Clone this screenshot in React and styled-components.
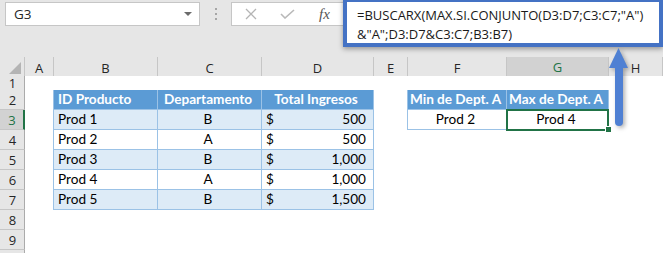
import React from 'react';
import styled, { createGlobalStyle } from 'styled-components';

const GlobalStyle = createGlobalStyle`
  html, body {
    margin: 0;
    padding: 0;
    background: #ffffff;
  }
`;

const BLUE_LINE = '#9bc2e6';
const HEAD_FILL = '#5b9bd5';
const BAND_FILL = '#ddebf7';
const GREEN = '#217346';
const COLUMNS = '25px 29px 104px 104px 112px 34px 99px 102px 1fr';

const tableRows = [
  ['Prod 1', 'B', '500'],
  ['Prod 2', 'A', '500'],
  ['Prod 3', 'B', '1,000'],
  ['Prod 4', 'A', '1,000'],
  ['Prod 5', 'B', '1,500'],
];

function App() {
  return (
    <>
      <GlobalStyle />
      <Frame>
        <TopBar>
          <NameBox>
            <span>G3</span>
            <DropArrow />
          </NameBox>
          <Dots>
            <Dot />
            <Dot />
            <Dot />
          </Dots>
          <FxBox>
            <svg width="12" height="12" viewBox="0 0 12 12">
              <path d="M1 1 L11 11 M11 1 L1 11" stroke="#b4b4b4" strokeWidth="1.3" fill="none" />
            </svg>
            <svg width="15" height="10" viewBox="0 0 15 10">
              <path d="M1 5 L5 9 L14 1" stroke="#b9b9b9" strokeWidth="1.6" fill="none" />
            </svg>
            <FxLabel>fx</FxLabel>
          </FxBox>
        </TopBar>

        <Sheet>
          <Row $h={19}>
            <Corner>
              <CornerTriangle />
            </Corner>
            {['A', 'B', 'C', 'D', 'E', 'F', 'G', 'H'].map((l) => (
              <ColHead key={l} $active={l === 'G'}>
                {l}
              </ColHead>
            ))}
          </Row>

          <Row $h={14}>
            <RowHead $short>1</RowHead>
            <Cell />
            <Cell $bb={BLUE_LINE} />
            <Cell $bb={BLUE_LINE} />
            <Cell $bb={BLUE_LINE} />
            <Cell />
            <Cell $bb={BLUE_LINE} />
            <Cell $bb={BLUE_LINE} />
            <Cell />
          </Row>

          <Row>
            <RowHead>2</RowHead>
            <Cell $rb={BLUE_LINE} />
            <Cell $head>ID Producto</Cell>
            <Cell $head $align="center">Departamento</Cell>
            <Cell $head $align="center">Total Ingresos</Cell>
            <Cell $rb={BLUE_LINE} />
            <Cell $head $align="center">Min de Dept. A</Cell>
            <Cell $head $align="center">Max de Dept. A</Cell>
            <Cell />
          </Row>

          {tableRows.map(([id, dept, total], i) => {
            const n = i + 3;
            const fill = i % 2 === 0 ? BAND_FILL : '#ffffff';
            return (
              <Row key={id}>
                <RowHead $active={n === 3}>{n}</RowHead>
                <Cell $rb={BLUE_LINE} />
                <Cell $fill={fill} $rb={BLUE_LINE} $bb={BLUE_LINE}>
                  {id}
                </Cell>
                <Cell $fill={fill} $rb={BLUE_LINE} $bb={BLUE_LINE} $align="center">
                  {dept}
                </Cell>
                <Cell $fill={fill} $rb={BLUE_LINE} $bb={BLUE_LINE} $align="space-between">
                  <span>$</span>
                  <span>{total}</span>
                </Cell>
                {n === 3 ? (
                  <>
                    <Cell $rb={BLUE_LINE} />
                    <Cell $rb={BLUE_LINE} $bb={BLUE_LINE} $align="center">
                      Prod 2
                    </Cell>
                    <Cell $rb={BLUE_LINE} $bb={BLUE_LINE} $align="center" $selected>
                      Prod 4
                      <FillHandle />
                    </Cell>
                  </>
                ) : (
                  <>
                    <Cell />
                    <Cell />
                    <Cell />
                  </>
                )}
                <Cell />
              </Row>
            );
          })}

          {[8, 9, 10].map((n) => (
            <Row key={n}>
              <RowHead>{n < 10 ? n : ''}</RowHead>
            </Row>
          ))}
        </Sheet>

        <FormulaCallout>
          <FormulaLine>=BUSCARX(MAX.SI.CONJUNTO(D3:D7;C3:C7;"A")</FormulaLine>
          <FormulaLine>&amp;"A";D3:D7&amp;C3:C7;B3:B7)</FormulaLine>
        </FormulaCallout>

        <ArrowWrap>
          <svg width="32" height="90" viewBox="0 0 32 90">
            <rect x="12" y="20" width="8" height="62" rx="4" fill="#4f80d3" />
            <polygon points="15.5,4 6,24 25,24" fill="#4f80d3" />
          </svg>
        </ArrowWrap>
      </Frame>
    </>
  );
}

const Frame = styled.div`
  position: relative;
  width: 663px;
  height: 253px;
  overflow: hidden;
  background: #ffffff;
`;

const TopBar = styled.div`
  height: 57px;
  box-sizing: border-box;
  background: #e6e6e6;
  display: flex;
  align-items: flex-start;
  padding: 2px 0 0 5px;
`;

const NameBox = styled.div`
  width: 195px;
  height: 24px;
  box-sizing: border-box;
  border: 1px solid #c6c6c6;
  background: #ffffff;
  display: flex;
  align-items: center;
  justify-content: space-between;
  padding: 0 7px 0 8px;
  font-family: 'Open Sans', sans-serif;
  font-size: 13.5px;
  color: #262626;
`;

const DropArrow = styled.span`
  width: 0;
  height: 0;
  border-left: 4px solid transparent;
  border-right: 4px solid transparent;
  border-top: 4px solid #6b6b6b;
`;

const Dots = styled.div`
  width: 31px;
  height: 24px;
  display: flex;
  flex-direction: column;
  align-items: center;
  justify-content: center;
  gap: 3px;
`;

const Dot = styled.span`
  width: 2px;
  height: 2px;
  background: #a6a6a6;
`;

const FxBox = styled.div`
  flex: 1;
  height: 24px;
  box-sizing: border-box;
  border: 1px solid #c6c6c6;
  background: #ffffff;
  display: flex;
  align-items: center;
  gap: 23px;
  padding-left: 13px;
`;

const FxLabel = styled.span`
  font-family: 'Liberation Serif', serif;
  font-style: italic;
  font-size: 15px;
  color: #555555;
  margin-left: 1px;
`;

const Sheet = styled.div`
  display: flex;
  flex-direction: column;
`;

const Row = styled.div`
  display: grid;
  grid-template-columns: ${COLUMNS};
  height: ${(p) => p.$h || 20}px;
`;

const Corner = styled.div`
  background: #e6e6e6;
  box-sizing: border-box;
  border-right: 1px solid #c6c6c6;
  border-bottom: 1px solid #ababab;
  display: flex;
  align-items: flex-end;
  justify-content: flex-end;
  padding: 0 3px 3px 0;
`;

const CornerTriangle = styled.span`
  width: 0;
  height: 0;
  border-left: 12px solid transparent;
  border-bottom: 12px solid #b4b4b4;
`;

const ColHead = styled.div`
  box-sizing: border-box;
  background: ${(p) => (p.$active ? '#d2d2d2' : '#e6e6e6')};
  color: ${(p) => (p.$active ? GREEN : '#262626')};
  border-right: 1px solid #c6c6c6;
  border-bottom: ${(p) => (p.$active ? `2px solid ${GREEN}` : '1px solid #ababab')};
  display: flex;
  align-items: center;
  justify-content: center;
  font-family: 'Open Sans', sans-serif;
  font-size: 13px;
  padding-top: 1px;
`;

const RowHead = styled.div`
  box-sizing: border-box;
  background: ${(p) => (p.$active ? '#d2d2d2' : '#e6e6e6')};
  color: ${(p) => (p.$active ? GREEN : '#262626')};
  border-bottom: 1px solid #c6c6c6;
  border-right: ${(p) => (p.$active ? `2px solid ${GREEN}` : '1px solid #ababab')};
  display: flex;
  align-items: ${(p) => (p.$short ? 'flex-start' : 'center')};
  justify-content: center;
  font-family: 'Open Sans', sans-serif;
  font-size: 13px;
  line-height: 14px;
  padding-left: 1px;
`;

const Cell = styled.div`
  position: ${(p) => (p.$selected ? 'relative' : 'static')};
  box-sizing: border-box;
  background: ${(p) => (p.$head ? HEAD_FILL : p.$fill || '#ffffff')};
  color: ${(p) => (p.$head ? '#ffffff' : '#000000')};
  font-weight: ${(p) => (p.$head ? 700 : 400)};
  border-right: ${(p) => (p.$head ? `1px solid ${BLUE_LINE}` : p.$rb ? `1px solid ${p.$rb}` : 'none')};
  border-bottom: ${(p) => (p.$head ? `1px solid ${BLUE_LINE}` : p.$bb ? `1px solid ${p.$bb}` : 'none')};
  display: flex;
  align-items: flex-end;
  justify-content: ${(p) => p.$align || 'flex-start'};
  padding: 0 7px 2px 4px;
  font-family: Lato, 'Liberation Sans', sans-serif;
  font-size: 13.6px;
  line-height: 16px;
  white-space: nowrap;

  ${(p) =>
    p.$selected &&
    `
    &::after {
      content: '';
      position: absolute;
      top: -1px;
      left: -1px;
      right: -1px;
      bottom: -2px;
      border: 2px solid ${GREEN};
      pointer-events: none;
    }
  `}
`;

const FillHandle = styled.span`
  position: absolute;
  right: -4px;
  bottom: -4px;
  width: 5px;
  height: 5px;
  background: ${GREEN};
  border: 1px solid #ffffff;
  z-index: 2;
`;

const FormulaCallout = styled.div`
  position: absolute;
  left: 343px;
  top: -2px;
  width: 320px;
  height: 49px;
  box-sizing: border-box;
  border: 4px solid #4472c4;
  background: #ffffff;
  box-shadow: 0 2px 5px rgba(0, 0, 0, 0.35);
  padding: 4px 0 0 10px;
  font-family: 'Open Sans', sans-serif;
  font-size: 13px;
  line-height: 19px;
  color: #1a1a1a;
  z-index: 5;
`;

const FormulaLine = styled.div`
  white-space: nowrap;
`;

const ArrowWrap = styled.div`
  position: absolute;
  left: 603px;
  top: 44px;
  width: 32px;
  height: 90px;
  filter: drop-shadow(2px 2px 2px rgba(0, 0, 0, 0.3));
  z-index: 6;
`;

export default App;
